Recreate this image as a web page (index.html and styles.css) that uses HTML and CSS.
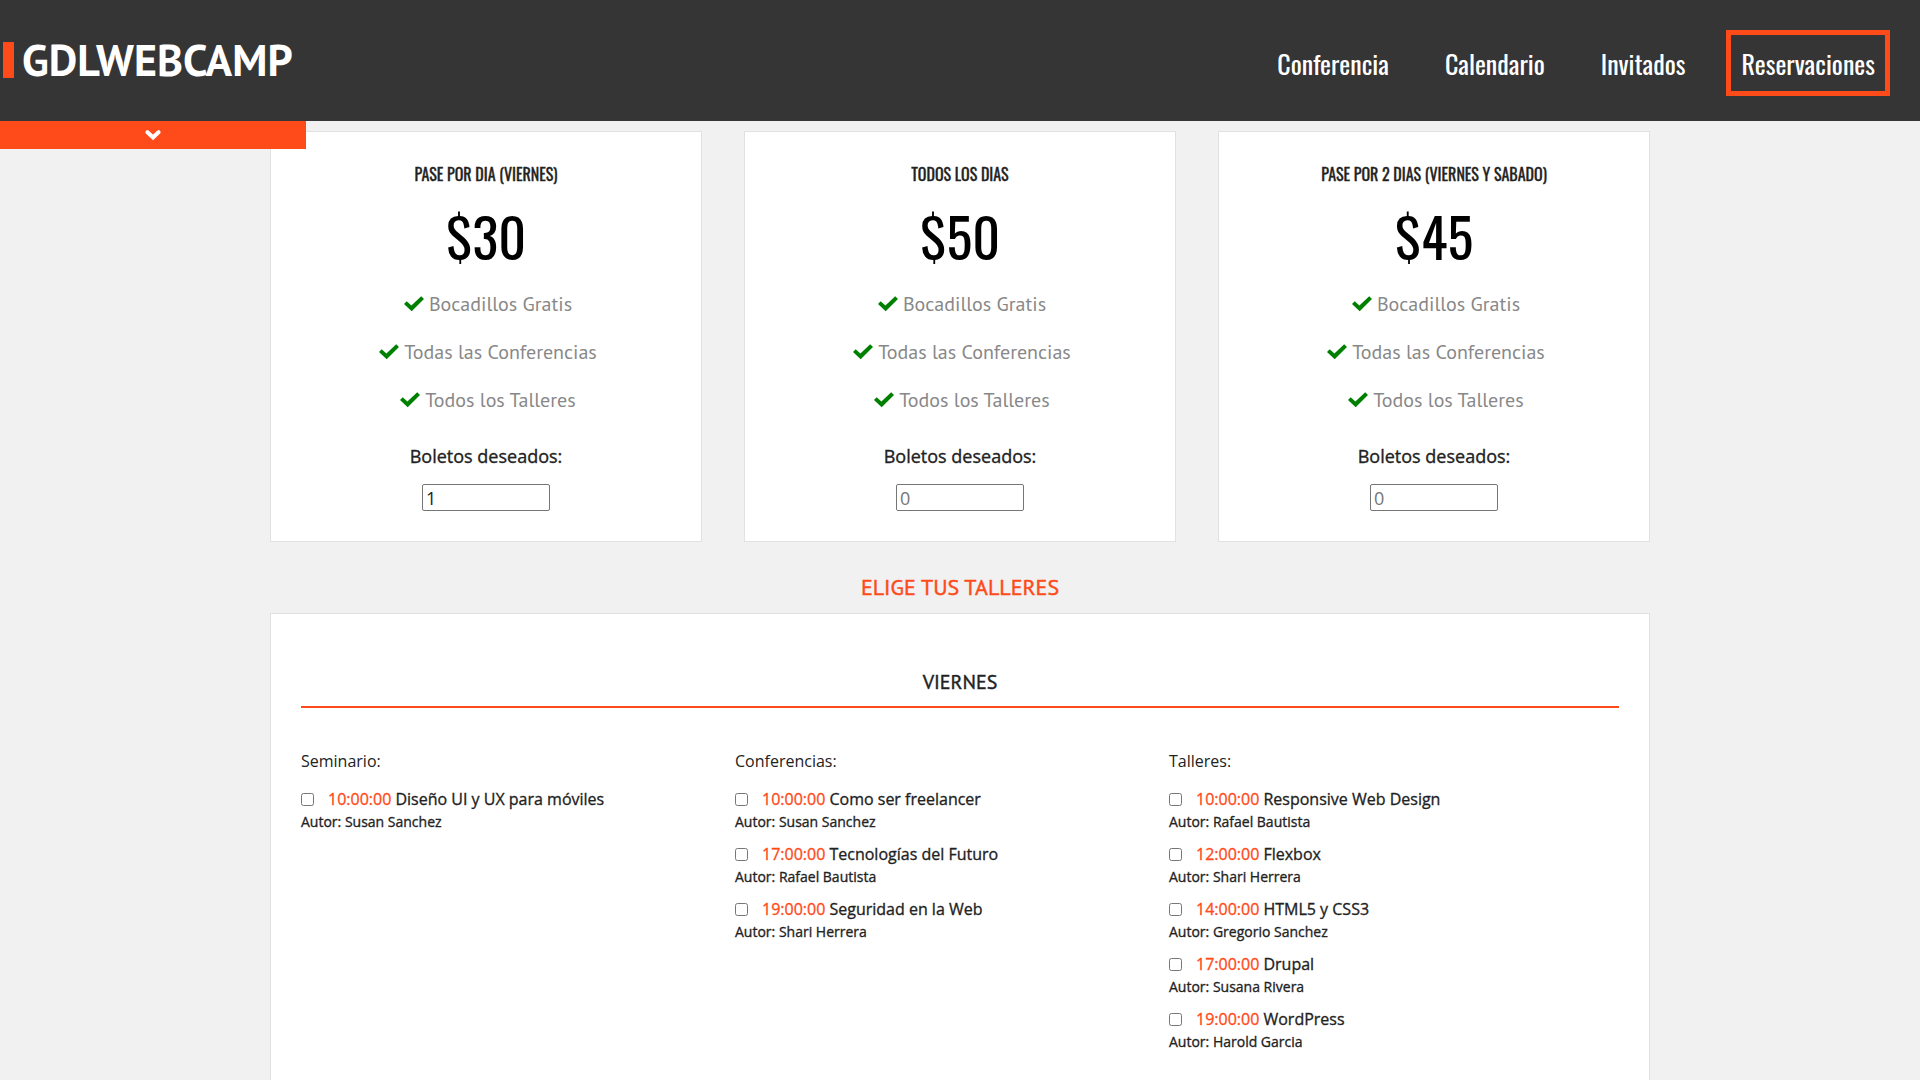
FILE: index.html
```html
<!DOCTYPE html>
<html lang="es">
<head>
<meta charset="utf-8">
<meta name="viewport" content="width=device-width, initial-scale=1">
<title>GDLWEBCAMP - Reservaciones</title>
<link rel="stylesheet" href="styles.css">
</head>
<body>
<svg class="sprite" aria-hidden="true">
  <symbol id="check" viewBox="0 0 20 16"><path d="M0 8 2.700 5.200 7.400 9.600 17.200.3 20 3.100 7.700 15.200Z"/></symbol>
  <symbol id="chevron" viewBox="0 0 16 12"><path d="M2.500 3.200 8 8.500 13.500 3.200"/></symbol>
</svg>
<header class="header">
  <a class="logo" href="#"><span class="logo-mark"></span>GDLWEBCAMP</a>
  <nav class="nav">
    <a class="nav-link" href="#">Conferencia</a>
    <a class="nav-link" href="#">Calendario</a>
    <a class="nav-link" href="#">Invitados</a>
    <a class="nav-link nav-link-active" href="#">Reservaciones</a>
  </nav>
  <button class="toggle" type="button" aria-label="Mostrar"><svg class="toggle-icon"><use href="#chevron"/></svg></button>
</header>
<main>
<form class="content">
  <div class="passes">
    <section class="pass">
      <h3 class="pass-title">Pase por dia (viernes)</h3>
      <p class="price">$30</p>
      <ul class="perks">
        <li><svg class="check"><use href="#check"/></svg>Bocadillos Gratis</li>
        <li><svg class="check"><use href="#check"/></svg>Todas las Conferencias</li>
        <li><svg class="check"><use href="#check"/></svg>Todos los Talleres</li>
      </ul>
      <label class="pass-label" for="pase-dia">Boletos deseados:</label>
      <input class="pass-input" id="pase-dia" type="number" min="0" placeholder="0" value="1">
    </section>
    <section class="pass">
      <h3 class="pass-title">Todos los dias</h3>
      <p class="price">$50</p>
      <ul class="perks">
        <li><svg class="check"><use href="#check"/></svg>Bocadillos Gratis</li>
        <li><svg class="check"><use href="#check"/></svg>Todas las Conferencias</li>
        <li><svg class="check"><use href="#check"/></svg>Todos los Talleres</li>
      </ul>
      <label class="pass-label" for="pase-completo">Boletos deseados:</label>
      <input class="pass-input" id="pase-completo" type="number" min="0" placeholder="0">
    </section>
    <section class="pass">
      <h3 class="pass-title">Pase por 2 dias (viernes y sabado)</h3>
      <p class="price">$45</p>
      <ul class="perks">
        <li><svg class="check"><use href="#check"/></svg>Bocadillos Gratis</li>
        <li><svg class="check"><use href="#check"/></svg>Todas las Conferencias</li>
        <li><svg class="check"><use href="#check"/></svg>Todos los Talleres</li>
      </ul>
      <label class="pass-label" for="pase-dosdias">Boletos deseados:</label>
      <input class="pass-input" id="pase-dosdias" type="number" min="0" placeholder="0">
    </section>
  </div>
  <h2 class="section-title">Elige tus talleres</h2>
  <section class="workshops">
    <h3 class="day">Viernes</h3>
    <div class="columns">
      <div>
        <p class="kind">Seminario:</p>
        <div class="event"><label class="event-label"><input class="event-box" type="checkbox"><span><time class="time">10:00:00</time> Diseño UI y UX para móviles</span></label><p class="author">Autor: Susan Sanchez</p></div>
      </div>
      <div>
        <p class="kind">Conferencias:</p>
        <div class="event"><label class="event-label"><input class="event-box" type="checkbox"><span><time class="time">10:00:00</time> Como ser freelancer</span></label><p class="author">Autor: Susan Sanchez</p></div>
        <div class="event"><label class="event-label"><input class="event-box" type="checkbox"><span><time class="time">17:00:00</time> Tecnologías del Futuro</span></label><p class="author">Autor: Rafael Bautista</p></div>
        <div class="event"><label class="event-label"><input class="event-box" type="checkbox"><span><time class="time">19:00:00</time> Seguridad en la Web</span></label><p class="author">Autor: Shari Herrera</p></div>
      </div>
      <div>
        <p class="kind">Talleres:</p>
        <div class="event"><label class="event-label"><input class="event-box" type="checkbox"><span><time class="time">10:00:00</time> Responsive Web Design</span></label><p class="author">Autor: Rafael Bautista</p></div>
        <div class="event"><label class="event-label"><input class="event-box" type="checkbox"><span><time class="time">12:00:00</time> Flexbox</span></label><p class="author">Autor: Shari Herrera</p></div>
        <div class="event"><label class="event-label"><input class="event-box" type="checkbox"><span><time class="time">14:00:00</time> HTML5 y CSS3</span></label><p class="author">Autor: Gregorio Sanchez</p></div>
        <div class="event"><label class="event-label"><input class="event-box" type="checkbox"><span><time class="time">17:00:00</time> Drupal</span></label><p class="author">Autor: Susana Rivera</p></div>
        <div class="event"><label class="event-label"><input class="event-box" type="checkbox"><span><time class="time">19:00:00</time> WordPress</span></label><p class="author">Autor: Harold Garcia</p></div>
      </div>
    </div>
  </section>
</form>
</main>
</body>
</html>
```
FILE: styles.css
```css
:root {
  --accent: #ff4a1a;
  --dark: #353535;
  --text: #222;
  --condensed: Oswald, "Liberation Sans Narrow", sans-serif;
  --humanist: "PT Sans", "Noto Sans", sans-serif;
  --emphasis: 0.02em;
}

* { box-sizing: border-box; }

body {
  margin: 0;
  min-height: 100vh;
  display: flex;
  flex-direction: column;
  background: #f1f1f1;
  color: var(--text);
  font: 16px/24px "Open Sans", sans-serif;
}

h2, h3, p, ul { margin: 0; padding: 0; }
ul { list-style: none; }
.sprite { display: none; }

/* Header */
.header {
  position: sticky;
  top: 0;
  z-index: 2;
  display: flex;
  align-items: flex-start;
  justify-content: space-between;
  padding: 30px 30px 25px 3px;
  background: var(--dark);
}

.logo {
  display: flex;
  align-items: center;
  gap: 8px;
  color: #fff;
  font: bold 44px/60px var(--humanist);
  text-decoration: none;
}

.logo-mark { width: 11px; height: 36px; background: var(--accent); }
.nav { display: flex; gap: 26px; }

.nav-link {
  padding: 11px 10px 9px;
  border: 5px solid transparent;
  color: #fff;
  font: 26px/36px var(--condensed);
  text-decoration: none;
}

.nav-link-active { border-color: var(--accent); }

.toggle {
  position: absolute;
  top: 100%;
  left: 0;
  width: 306px;
  height: 28px;
  padding: 0;
  border: 0;
  background: var(--accent);
  cursor: pointer;
}

.toggle-icon {
  display: block;
  width: 16px;
  height: 12px;
  margin: 0 auto;
  fill: none;
  stroke: #fff;
  stroke-width: 4;
  stroke-linecap: round;
}

/* Passes */
main { flex: 1; display: flex; }

.content {
  flex: 1;
  display: flex;
  flex-direction: column;
  max-width: 1380px;
  margin: 10px auto 0;
}

.passes { display: grid; grid-template-columns: repeat(3, 1fr); gap: 42px; }

.pass {
  display: flex;
  flex-direction: column;
  align-items: center;
  padding: 30px;
  border: 1px solid #e1e1e1;
  background: #fff;
}

.pass-title {
  font: 16px/24px var(--condensed);
  text-transform: uppercase;
  -webkit-text-stroke: var(--emphasis);
}

.price {
  margin: 16px 0 10px;
  color: #000;
  font: 54px/68px var(--condensed);
}

.perks {
  padding-left: 4px;
  color: #888;
  font: 20px/48px var(--humanist);
  text-align: center;
}

.perks li { display: flex; align-items: center; justify-content: center; gap: 5px; }
.check { width: 20px; height: 16px; fill: #008000; }

.pass-label {
  margin: 20px 0 16px;
  font-size: 18px;
  line-height: 24px;
  -webkit-text-stroke: var(--emphasis);
}

.pass-input {
  width: 128px;
  height: 27px;
  padding: 1px 3px;
  border: 1px solid #767676;
  border-radius: 2px;
  background: #fff;
  color: var(--text);
  font: 18px/24px "Open Sans", sans-serif;
}

.pass-input::placeholder { color: #757575; }

/* Workshops */
.section-title {
  margin: 29px 0 10px;
  color: var(--accent);
  font: 22px/32px var(--humanist);
  text-align: center;
  text-transform: uppercase;
  -webkit-text-stroke: var(--emphasis);
}

.workshops {
  flex: 1;
  padding: 50px 30px 0;
  border: 1px solid #e1e1e1;
  border-bottom: 0;
  background: #fff;
}

.day {
  padding: 2px 0 8px;
  border-bottom: 2px solid var(--accent);
  font: 20px/32px var(--humanist);
  text-align: center;
  text-transform: uppercase;
  -webkit-text-stroke: var(--emphasis);
}

.columns { display: grid; grid-template-columns: repeat(3, 434px); margin-top: 41px; }
.kind { margin-bottom: 14px; }
.event { margin-bottom: 9px; -webkit-text-stroke: var(--emphasis); }
.event-label { display: flex; align-items: center; }
.event-box { width: 13px; height: 13px; margin: 0 14px 0 0; }
.time { color: var(--accent); }
.author { font-size: 14px; line-height: 22px; }
```
